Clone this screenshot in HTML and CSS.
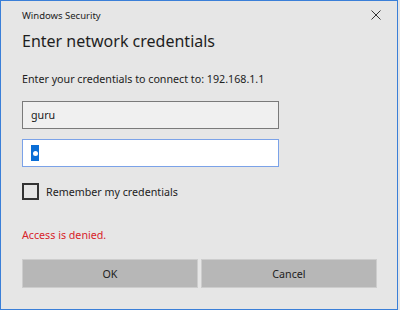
FILE: index.html
```html
<!DOCTYPE html>
<html>
    <head>
        <meta charset="utf-8">
        <title>Windows Security</title>
        <link rel="stylesheet" href="styles.css">
    </head>
    <body>
        <div class="dialog">
            <div class="titlebar">
                <span class="caption">Windows Security</span>
                <svg class="close" width="10" height="10" viewBox="0 0 10 10">
                    <path d="M0.5 0.5 L9.5 9.5 M9.5 0.5 L0.5 9.5" stroke="#333" stroke-width="1" fill="none"/>
                </svg>
            </div>
            <div class="content">
                <h1>Enter network credentials</h1>
                <p class="prompt">Enter your credentials to connect to: 192.168.1.1</p>
                <div class="field filled">guru</div>
                <div class="field focused"><span class="sel"><span class="dot"></span></span></div>
                <label class="remember"><span class="check"></span>Remember my credentials</label>
                <p class="error">Access is denied.</p>
                <div class="buttons">
                    <button class="btn">OK</button>
                    <button class="btn">Cancel</button>
                </div>
            </div>
        </div>
    </body>
</html>
```

FILE: styles.css
```css
body {
    margin: 0;
    background: #e6e6e6;
    font-family: "Noto Sans", "Open Sans", sans-serif;
    color: #1a1a1a;
}

.dialog {
    width: 398px;
    height: 310px;
    box-sizing: border-box;
    border: 1px solid #3a7fd8;
    background: #e6e6e6;
}

.titlebar {
    height: 28px;
    display: flex;
    align-items: center;
    justify-content: space-between;
    padding: 0 16px 0 21px;
}

.caption {
    font-size: 9.5px;
    color: #222;
}

.content {
    padding: 0 20px 0 21px;
}

h1 {
    margin: 0;
    font-size: 16px;
    font-weight: normal;
    line-height: 24px;
    color: #1e1e1e;
}

.prompt {
    margin: 18px 0 0;
    font-size: 10.7px;
    line-height: 16px;
    color: #222;
}

.field {
    width: 257px;
    height: 28px;
    box-sizing: border-box;
    display: flex;
    align-items: center;
    padding-left: 8px;
    font-size: 10.7px;
}

.filled {
    margin-top: 14px;
    background: #f0f0f0;
    border: 1px solid #7a7a7a;
}

.focused {
    margin-top: 10px;
    background: #fff;
    border: 1px solid #7ba2e8;
}

.sel {
    width: 8px;
    height: 16px;
    background: #0a6ed6;
    display: flex;
    align-items: center;
    justify-content: center;
}

.dot {
    width: 5px;
    height: 5px;
    border-radius: 50%;
    background: #fff;
}

.remember {
    margin-top: 16px;
    display: flex;
    align-items: center;
    font-size: 10.7px;
    color: #222;
}

.check {
    width: 17px;
    height: 17px;
    box-sizing: border-box;
    border: 2px solid #333;
    margin-right: 7px;
}

.error {
    margin: 27px 0 0;
    font-size: 10.7px;
    line-height: 16px;
    color: #d8232a;
}

.buttons {
    margin-top: 16px;
    display: flex;
    gap: 3px;
    width: 355px;
}

.btn {
    flex: 1;
    height: 29px;
    border: 1px solid #cdcdcd;
    background: #b7b7b7;
    font-family: inherit;
    font-size: 10.7px;
    color: #222;
}
```
